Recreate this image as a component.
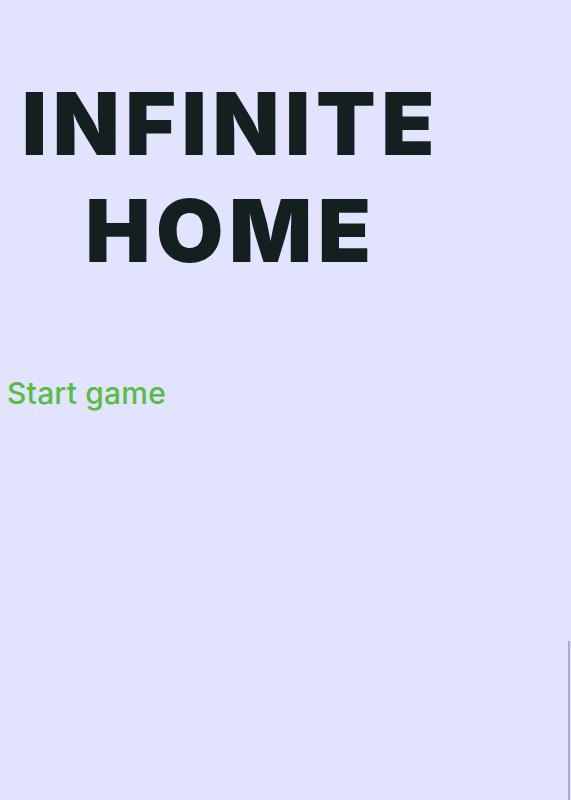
export default function App() {
  return (
    <div className="relative min-h-[800px] w-full bg-[#e1e3ff] overflow-hidden">
      <div className="w-[462px] pt-[70px] text-center">
        <h1 className="font-['Inter',sans-serif] font-black text-[87px] leading-[107px] tracking-[5.6px] text-[#142020]">
          INFINITE
          <br />
          HOME
        </h1>
      </div>
      <div className="mt-[87px] pl-[7px]">
        <button className="font-['Inter',sans-serif] text-[30px] text-[#57bd45] font-medium tracking-[0.2px]">
          Start game
        </button>
      </div>
      <div className="absolute right-[1px] top-[641px] bottom-0 w-[2px] bg-[#a9acd0]" />
    </div>
  );
}
